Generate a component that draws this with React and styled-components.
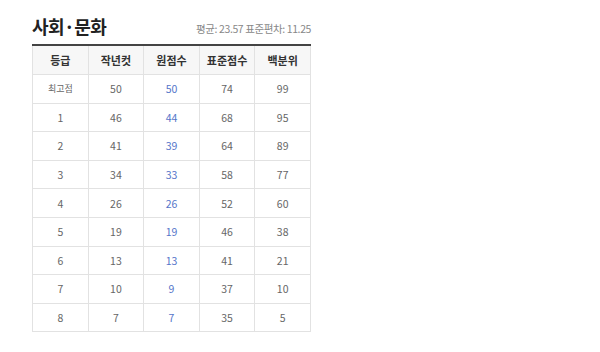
import React from "react";
import styled, { createGlobalStyle } from "styled-components";

const Global = createGlobalStyle`
  html, body { margin: 0; padding: 0; background: #fff; }
  body { font-family: "Noto Sans CJK KR", "Noto Sans", sans-serif; }
`;

const Wrap = styled.div`
  width: 279px;
  padding: 14px 0 0 32px;
`;

const Head = styled.div`
  display: flex;
  align-items: flex-end;
  justify-content: space-between;
  height: 24px;
  margin-bottom: 6px;
`;

const Title = styled.h2`
  margin: 0;
  font-size: 18px;
  line-height: 24px;
  font-weight: 700;
  color: #222;
  letter-spacing: -0.5px;
`;

const Stat = styled.span`
  font-size: 10.5px;
  color: #888;
  line-height: 18px;
  letter-spacing: -0.4px;
`;

const Table = styled.table`
  width: 279px;
  border-collapse: collapse;
  border-top: 2px solid #444;
  table-layout: fixed;
`;

const Th = styled.th`
  height: 28px;
  background: #f7f7f7;
  border: 1px solid #e2e2e2;
  border-top: none;
  font-size: 11px;
  font-weight: 700;
  color: #333;
  text-align: center;
  padding: 0;
`;

const Td = styled.td`
  height: 27.6px;
  border: 1px solid #e2e2e2;
  font-size: ${(p) => (p.$small ? "9px" : "10.5px")};
  color: ${(p) => (p.$blue ? "#5475c9" : "#666")};
  text-align: center;
  padding: 0;
`;

const rows = [
  ["최고점", 50, 50, 74, 99],
  [1, 46, 44, 68, 95],
  [2, 41, 39, 64, 89],
  [3, 34, 33, 58, 77],
  [4, 26, 26, 52, 60],
  [5, 19, 19, 46, 38],
  [6, 13, 13, 41, 21],
  [7, 10, 9, 37, 10],
  [8, 7, 7, 35, 5],
];

export default function App() {
  return (
    <Wrap>
      <Global />
      <Head>
        <Title>사회·문화</Title>
        <Stat>평균: 23.57 표준편차: 11.25</Stat>
      </Head>
      <Table>
        <thead>
          <tr>
            <Th>등급</Th>
            <Th>작년컷</Th>
            <Th>원점수</Th>
            <Th>표준점수</Th>
            <Th>백분위</Th>
          </tr>
        </thead>
        <tbody>
          {rows.map((r, i) => (
            <tr key={i}>
              <Td $small={i === 0}>{r[0]}</Td>
              <Td>{r[1]}</Td>
              <Td $blue>{r[2]}</Td>
              <Td>{r[3]}</Td>
              <Td>{r[4]}</Td>
            </tr>
          ))}
        </tbody>
      </Table>
    </Wrap>
  );
}
